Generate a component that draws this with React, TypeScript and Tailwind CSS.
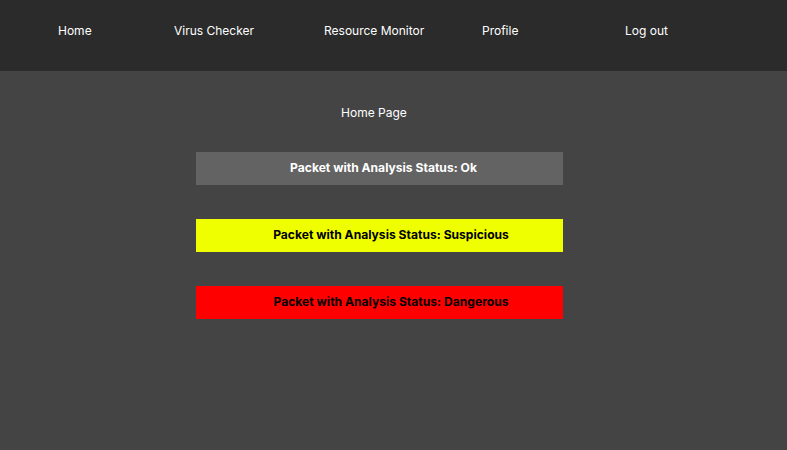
const navItems = [
  { label: 'Home', className: 'w-[116px]' },
  { label: 'Virus Checker', className: 'w-[150px]' },
  { label: 'Resource Monitor', className: 'w-[158px]' },
  { label: 'Profile', className: 'w-[143px]' },
  { label: 'Log out', className: '' },
]

const packets = [
  { status: 'Ok', box: 'bg-[#636363] text-white pl-[8px]' },
  { status: 'Suspicious', box: 'bg-[#f0ff00] text-black pl-[23px]' },
  { status: 'Dangerous', box: 'bg-[#ff0000] text-black pl-[23px]' },
]

export default function App() {
  return (
    <div className="min-h-screen bg-[#444444] font-['Inter',sans-serif]">
      <nav className="h-[71px] bg-[#2b2b2b] flex items-center pl-[58px] pb-[10px] pt-[1px]">
        {navItems.map((item) => (
          <a key={item.label} className={`text-[12px] text-white shrink-0 ${item.className}`}>
            {item.label}
          </a>
        ))}
      </nav>

      <div className="w-[367px] ml-[196px] flex flex-col">
        <p className="mt-[33px] text-[12px] text-white text-center pr-[11px] leading-[18px]">
          Home Page
        </p>
        <div className="mt-[30px] flex flex-col gap-[34px]">
          {packets.map((p) => (
            <div
              key={p.status}
              className={`h-[33px] flex items-center justify-center text-[12.1px] font-bold ${p.box}`}
            >
              Packet with Analysis Status: {p.status}
            </div>
          ))}
        </div>
      </div>
    </div>
  )
}
